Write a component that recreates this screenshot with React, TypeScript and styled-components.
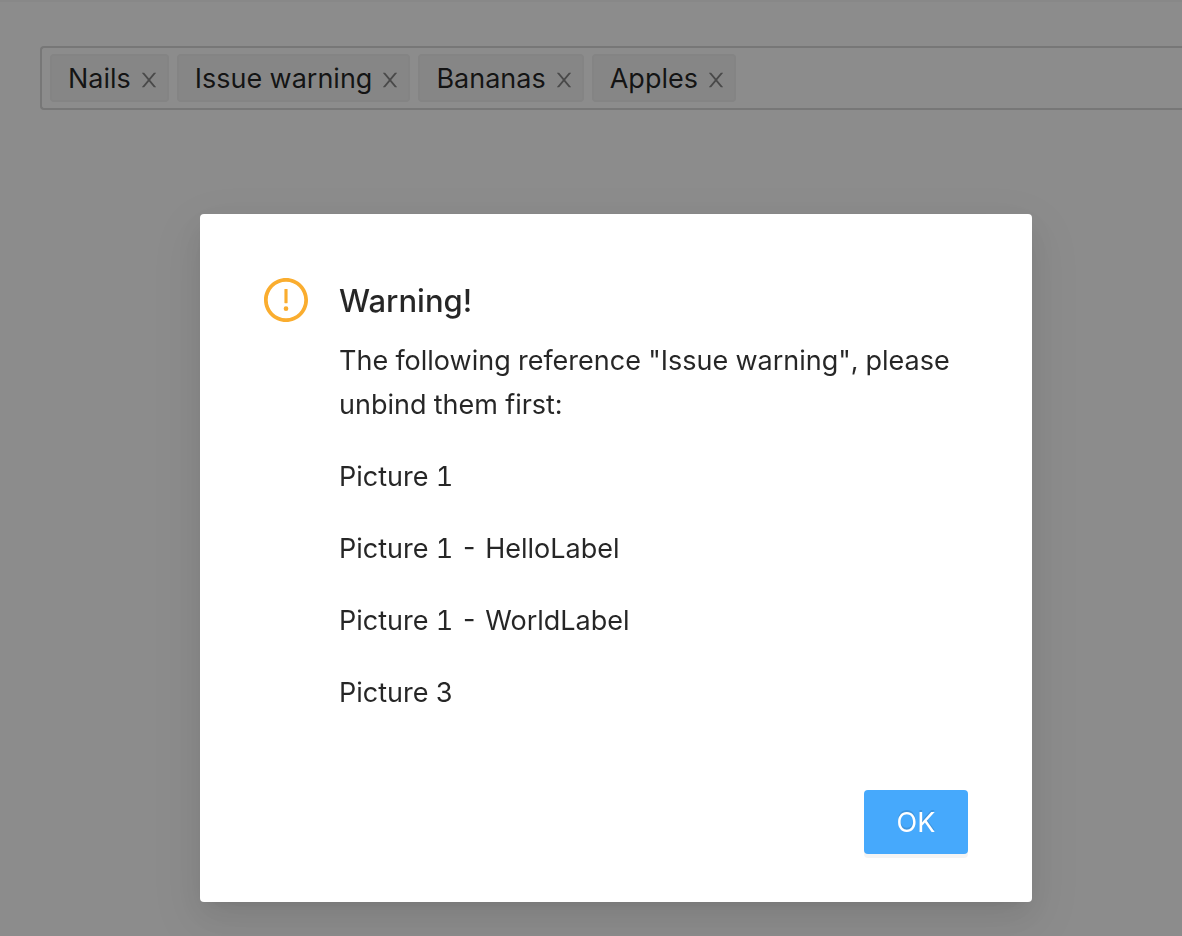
import React, { useState } from "react";
import styled, { createGlobalStyle } from "styled-components";

const GlobalStyle = createGlobalStyle`
  *, *::before, *::after { box-sizing: border-box; }
  body {
    margin: 0;
    overflow: hidden;
    background: #ffffff;
    color: rgba(0, 0, 0, 0.85);
    font-family: Inter, "Liberation Sans", sans-serif;
    font-size: 27px;
    font-weight: 430;
    font-variant-numeric: tabular-nums;
    line-height: 44px;
  }
`;

const Page = styled.main`
  min-height: 100vh;
  padding: 44px 0 0 40px;
  border-top: 2px solid #f7f7f7;
`;

const TagField = styled.ul`
  display: flex;
  gap: 8px;
  margin: 0;
  padding: 6px 8px;
  list-style: none;
  border: 2px solid #d9d9d9;
  border-right: 0;
  border-radius: 4px 0 0 4px;
`;

const Tag = styled.li`
  display: flex;
  align-items: center;
  gap: 8px;
  height: 48px;
  padding: 2px 8px 0 16px;
  background: #f5f5f5;
  border: 2px solid #f0f0f0;
  border-radius: 4px;
  white-space: nowrap;
`;

const RemoveButton = styled.button`
  display: flex;
  padding: 2px 0 0;
  border: 0;
  background: none;
  color: rgba(0, 0, 0, 0.45);
  cursor: pointer;
`;

const Mask = styled.div`
  position: fixed;
  inset: 0;
  padding: 214px 150px 34px 200px;
  overflow: auto;
  background: rgba(0, 0, 0, 0.45);
`;

const Dialog = styled.section`
  max-width: 832px;
  margin: 0 auto;
  padding: 64px 64px 48px;
  background: #ffffff;
  border-radius: 4px;
  box-shadow:
    0 6px 12px -8px rgba(0, 0, 0, 0.12),
    0 12px 32px 0 rgba(0, 0, 0, 0.08),
    0 18px 56px 16px rgba(0, 0, 0, 0.05);
`;

const DialogBody = styled.div`
  display: flex;
  gap: 31px;
  color: #faad2f;
`;

const DialogText = styled.div`
  flex: 1;
  min-width: 0;
  color: rgba(0, 0, 0, 0.85);
`;

const Title = styled.h1`
  margin: 0 0 15px;
  font-size: 31px;
  font-weight: 550;
  line-height: 46px;
`;

const Paragraph = styled.p`
  margin: 0 0 28px;
`;

const DialogActions = styled.footer`
  display: flex;
  justify-content: flex-end;
  margin-top: 47px;
`;

const PrimaryButton = styled.button`
  min-width: 104px;
  height: 64px;
  padding: 2px 30px 0;
  border: 0;
  border-radius: 4px;
  background: #46a9fc;
  color: #ffffff;
  font: inherit;
  text-shadow: 0 -2px 0 rgba(0, 0, 0, 0.12);
  box-shadow: 0 4px 0 rgba(0, 0, 0, 0.045);
  cursor: pointer;
`;

const CloseIcon = () => (
  <svg width="20" height="20" viewBox="64 64 896 896" fill="currentColor" aria-hidden="true">
    <path d="M563.8 512l262.5-312.9c4.4-5.2.7-13.1-6.1-13.1h-79.8c-4.7 0-9.2 2.1-12.3 5.7L511.6 449.8 295.1 191.7c-3-3.6-7.5-5.7-12.3-5.7H203c-6.8 0-10.5 7.9-6.1 13.1L459.4 512 196.9 824.9A7.95 7.95 0 00203 838h79.8c4.7 0 9.2-2.1 12.3-5.7l216.5-258.1 216.5 258.1c3 3.6 7.5 5.7 12.3 5.7h79.8c6.8 0 10.5-7.9 6.1-13.1L563.8 512z" />
  </svg>
);

const WarningIcon = () => (
  <svg width="44" height="44" viewBox="64 64 896 896" fill="currentColor" aria-hidden="true">
    <path d="M512 64C264.6 64 64 264.6 64 512s200.6 448 448 448 448-200.6 448-448S759.4 64 512 64zm0 820c-205.4 0-372-166.6-372-372s166.6-372 372-372 372 166.6 372 372-166.6 372-372 372z" />
    <path d="M464 688a48 48 0 1096 0 48 48 0 10-96 0zm24-112h48c4.4 0 8-3.6 8-8V296c0-4.4-3.6-8-8-8h-48c-4.4 0-8 3.6-8 8v272c0 4.4 3.6 8 8 8z" />
  </svg>
);

const references = ["Picture 1", "Picture 1 - HelloLabel", "Picture 1 - WorldLabel", "Picture 3"];

export default function App() {
  const [tags, setTags] = useState(["Nails", "Issue warning", "Bananas", "Apples"]);
  const [open, setOpen] = useState(true);

  const removeTag = (tag: string) => {
    if (tag === "Issue warning") setOpen(true);
    else setTags(tags.filter((item) => item !== tag));
  };

  return (
    <>
      <GlobalStyle />
      <Page>
        <TagField>
          {tags.map((tag) => (
            <Tag key={tag}>
              {tag}
              <RemoveButton type="button" aria-label={`Remove ${tag}`} onClick={() => removeTag(tag)}>
                <CloseIcon />
              </RemoveButton>
            </Tag>
          ))}
        </TagField>
      </Page>
      {open && (
        <Mask>
          <Dialog role="alertdialog" aria-modal="true" aria-labelledby="dialog-title">
            <DialogBody>
              <WarningIcon />
              <DialogText>
                <Title id="dialog-title">Warning!</Title>
                <Paragraph>The following reference "Issue warning", please unbind them first:</Paragraph>
                {references.map((name) => (
                  <Paragraph key={name}>{name}</Paragraph>
                ))}
              </DialogText>
            </DialogBody>
            <DialogActions>
              <PrimaryButton type="button" onClick={() => setOpen(false)}>OK</PrimaryButton>
            </DialogActions>
          </Dialog>
        </Mask>
      )}
    </>
  );
}
